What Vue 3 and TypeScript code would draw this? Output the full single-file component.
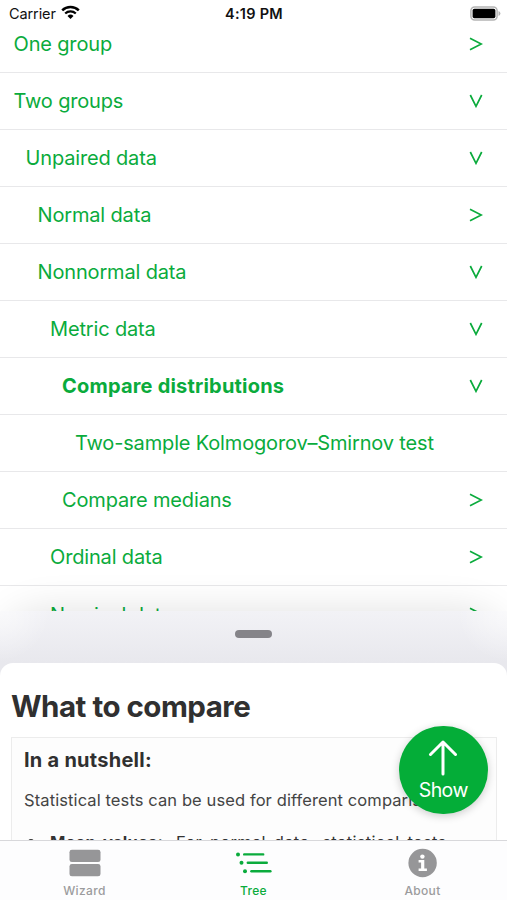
<script setup lang="ts">
interface TreeRow {
  label: string
  level: number
  state: 'open' | 'closed' | 'leaf'
  current?: boolean
}

const rows: TreeRow[] = [
  { label: 'One group', level: 0, state: 'closed' },
  { label: 'Two groups', level: 0, state: 'open' },
  { label: 'Unpaired data', level: 1, state: 'open' },
  { label: 'Normal data', level: 2, state: 'closed' },
  { label: 'Nonnormal data', level: 2, state: 'open' },
  { label: 'Metric data', level: 3, state: 'open' },
  { label: 'Compare distributions', level: 4, state: 'open', current: true },
  { label: 'Two-sample Kolmogorov–Smirnov test', level: 5, state: 'leaf' },
  { label: 'Compare medians', level: 4, state: 'closed' },
  { label: 'Ordinal data', level: 3, state: 'closed' },
  { label: 'Nominal data', level: 3, state: 'closed' },
]
</script>

<template>
  <div class="screen">
    <header class="status">
      <div class="carrier">
        <span>Carrier</span>
        <svg width="19" height="15" viewBox="0 0 19 15" fill="none" stroke="#000">
          <path d="M1.2 5.4A12 12 0 0 1 17.8 5.4" stroke-width="2.5" />
          <path d="M4.2 8.5A7.8 7.8 0 0 1 14.8 8.5" stroke-width="2.3" />
          <path d="M9.5 14L6.5 10.9A4.5 4.5 0 0 1 12.5 10.9Z" fill="#000" stroke="none" />
        </svg>
      </div>
      <span class="time">4:19 PM</span>
      <svg class="battery" width="31" height="15" viewBox="0 0 31 15">
        <rect x="0.9" y="0.9" width="26.2" height="13.2" rx="3.8" fill="#fff" stroke="#b4b4b4" stroke-width="1.5" />
        <rect x="2.6" y="2.8" width="22.8" height="9.4" rx="1.8" fill="#000" />
        <path d="M28.5 5Q30.4 5.6 30.4 7.5T28.5 10Z" fill="#b4b4b4" />
      </svg>
    </header>

    <main class="tree">
      <div v-for="row in rows" :key="row.label" class="row" :class="['level-' + row.level, { current: row.current }]">
        <span class="label">{{ row.label }}</span>
        <svg v-if="row.state !== 'leaf'" class="chevron" :class="row.state" width="14" height="14" viewBox="0 0 14 14">
          <path d="M1 1.3L12.3 7L1 12.7" />
        </svg>
      </div>
    </main>

    <section class="sheet">
      <div class="grip"><i></i></div>
      <article class="card">
        <h1>What to compare</h1>
        <div class="summary">
          <h2>In a nutshell:</h2>
          <p>Statistical tests can be used for different comparisons:</p>
          <ul>
            <li><b>Mean values:</b> <span>For normal data, statistical tests</span></li>
          </ul>
        </div>
      </article>
      <button class="show">
        <svg width="30" height="36" viewBox="0 0 30 36" fill="none" stroke="#fff" stroke-width="3" stroke-linecap="round" stroke-linejoin="round">
          <path d="M15 34V2M2.5 14.5L15 2L27.5 14.5" />
        </svg>
        <span>Show</span>
      </button>
    </section>

    <nav class="tabs">
      <div class="tab">
        <svg width="36" height="30" viewBox="0 0 36 30" fill="#969698">
          <rect x="2.5" y="1.8" width="31" height="12.3" rx="2.4" />
          <rect x="2.5" y="16" width="31" height="12.3" rx="2.4" />
        </svg>
        <span>Wizard</span>
      </div>
      <div class="tab active">
        <svg width="36" height="30" viewBox="0 0 36 30" fill="#0aab3c">
          <circle cx="2" cy="6.4" r="2" /><rect x="7" y="5.2" width="21.4" height="2.4" rx="1.2" />
          <circle cx="5.5" cy="14.8" r="2" /><rect x="10.6" y="13.6" width="21.4" height="2.4" rx="1.2" />
          <circle cx="9" cy="23.2" r="2" /><rect x="14.2" y="22" width="21.4" height="2.4" rx="1.2" />
        </svg>
        <span>Tree</span>
      </div>
      <div class="tab">
        <svg width="36" height="30" viewBox="0 0 36 30">
          <circle cx="17.6" cy="15" r="14.2" fill="#969698" />
          <circle cx="17.4" cy="8.6" r="2.2" fill="#fff" />
          <path d="M13.6 12.1H19.3V20.6H21.9V22.9H13.6V20.6H16.1V14.4H13.6Z" fill="#fff" />
        </svg>
        <span>About</span>
      </div>
    </nav>
  </div>
</template>

<style>
body { background: #fff; }
</style>

<style scoped>
.screen {
  width: 507px;
  height: 900px;
  overflow: hidden;
  display: flex;
  flex-direction: column;
  background: #fff;
  font-family: Inter, "Liberation Sans", sans-serif;
}
.status {
  height: 16px;
  flex: none;
  display: grid;
  grid-template-columns: 1fr auto 1fr;
  align-items: start;
  padding: 0 6px 0 9px;
  position: relative;
  z-index: 1;
  color: #111;
  font-size: 14.5px;
  line-height: 27px;
}
.carrier { display: flex; gap: 5px; }
.carrier span { letter-spacing: -0.1px; }
.carrier svg { margin-top: 5px; }
.time { font-weight: 600; letter-spacing: 0.25px; margin-right: 2px; }
.battery { justify-self: end; margin-top: 6px; }
.tree { height: 595px; flex: none; overflow: hidden; }
.row {
  box-sizing: border-box;
  height: 57px;
  border-bottom: 1px solid #e8e8ea;
  display: flex;
  align-items: center;
  justify-content: space-between;
  padding-right: 24px;
  color: #0aab3c;
  font-size: 20px;
  line-height: 24px;
  letter-spacing: -0.16px;
  white-space: nowrap;
}
.row:last-child .label { padding-top: 1px; }
.level-0 { padding-left: 13.5px; }
.level-1 { padding-left: 25.5px; }
.level-2 { padding-left: 37.5px; }
.level-3 { padding-left: 50px; }
.level-4 { padding-left: 62px; }
.level-5 { padding-left: 75px; }
.current { font-weight: 700; letter-spacing: 0.2px; }
.chevron { fill: none; stroke: #0aab3c; stroke-width: 1.7; }
.chevron.open { transform: rotate(90deg); }
.sheet {
  height: 229px;
  flex: none;
  position: relative;
  border-radius: 46px 46px 0 0;
  box-shadow: 0 0 40px rgba(0, 0, 0, 0.12);
}
.grip {
  height: 66px;
  margin-bottom: -14px;
  display: flex;
  justify-content: center;
  background:
    radial-gradient(circle 50px at 0 0, rgba(255, 255, 255, 0.6), rgba(255, 255, 255, 0.38) 40%, transparent),
    radial-gradient(circle 50px at 100% 0, rgba(255, 255, 255, 0.6), rgba(255, 255, 255, 0.38) 40%, transparent),
    linear-gradient(#f2f2f6 0, #e8e8ed 52px);
}
.grip i { width: 37px; height: 8px; margin-top: 19px; border-radius: 4px; background: #858489; }
.card {
  box-sizing: border-box;
  height: 177px;
  padding: 24px 10px 0 11px;
  overflow: hidden;
  background: #fff;
  border-radius: 13px 13px 0 0;
  color: #333;
}
h1 { margin: 0; font-size: 29.5px; line-height: 38px; font-weight: 700; letter-spacing: -0.5px; color: #303030; }
.summary { margin-top: 12px; border: 1px solid #ececec; padding: 0 12px; height: 180px; background: #fdfdfd; white-space: nowrap; }
h2 { margin: 9px 0 0; font-size: 20px; line-height: 26px; font-weight: 700; letter-spacing: 0.25px; color: #303030; }
p { margin: 15px 0 0; font-size: 16.5px; line-height: 24px; letter-spacing: 0.1px; color: #444; }
ul { margin: 17px 0 0; padding: 0; list-style: none; font-size: 16.5px; line-height: 26px; }
li { display: flex; align-items: center; letter-spacing: 0.32px; word-spacing: 3px; }
li::before { content: ""; width: 6px; height: 6px; margin: 0 16px 0 4px; border-radius: 50%; background: #333; }
li b { width: 126px; letter-spacing: 0.2px; }
.show {
  position: absolute;
  left: 399px;
  top: 114.5px;
  width: 88.5px;
  height: 88.5px;
  border: 0;
  border-radius: 50%;
  padding: 14px 0 0;
  display: flex;
  flex-direction: column;
  align-items: center;
  background: #04ad38;
  box-shadow: 0 2px 9px rgba(0, 0, 0, 0.2);
  color: #fff;
  font: 19.5px/24px Inter, sans-serif;
  letter-spacing: -0.55px;
}
.show span { margin-top: 2px; }
.tabs {
  box-sizing: border-box;
  height: 60px;
  flex: none;
  position: relative;
  border-top: 1px solid #d8d8db;
  display: grid;
  grid-template-columns: repeat(3, 1fr);
  background: #fdfdfe;
}
.tab { display: flex; flex-direction: column; align-items: center; padding-top: 7px; color: #9b9b9d; font-size: 12px; font-weight: 500; line-height: 16px; letter-spacing: 0.35px; }
.tab span { margin-top: 5px; }
.active { color: #0aab3c; }
</style>
